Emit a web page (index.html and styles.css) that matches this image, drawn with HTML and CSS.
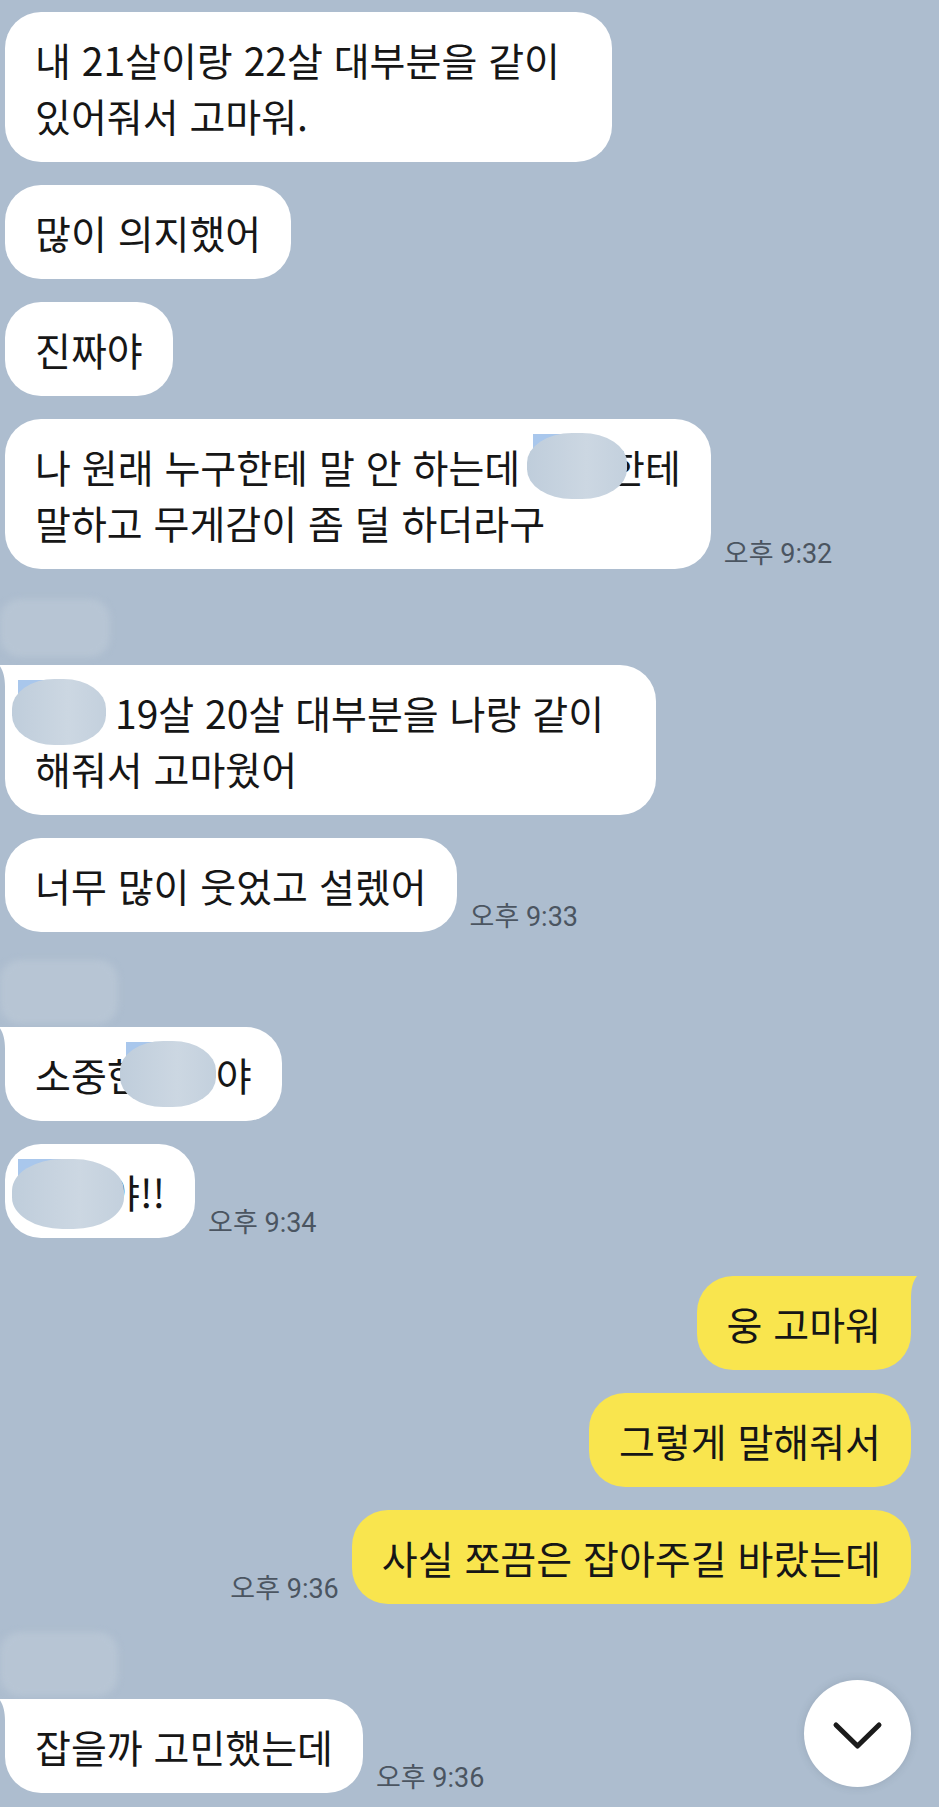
FILE: index.html
```html
<!DOCTYPE html>
<html lang="ko-KR">

<head>
  <meta charset="UTF-8">
  <meta name="viewport" content="width=device-width, initial-scale=1.0">
  <title>채팅</title>
  <link rel="stylesheet" href="styles.css">
</head>

<body>
  <main class="chat">
    <section class="group">
      <div class="row in">
        <p class="bubble multi">내 21살이랑 22살 대부분을 같이<br>있어줘서 고마워.</p>
      </div>
      <div class="row in">
        <p class="bubble">많이 의지했어</p>
      </div>
      <div class="row in">
        <p class="bubble">진짜야</p>
      </div>
      <div class="row in">
        <p class="bubble">나 원래 누구한테 말 안 하는데 <span class="blur b1"></span>한테<br>말하고 무게감이 좀 덜 하더라구</p>
        <span class="time">오후 9:32</span>
      </div>
    </section>

    <section class="group">
      <div class="sender"></div>
      <div class="row in">
        <p class="bubble tail multi"><span class="blur b2"></span>19살 20살 대부분을 나랑 같이<br>해줘서 고마웠어</p>
      </div>
      <div class="row in">
        <p class="bubble">너무 많이 웃었고 설렜어</p>
        <span class="time">오후 9:33</span>
      </div>
    </section>

    <section class="group">
      <div class="sender wide"></div>
      <div class="row in">
        <p class="bubble tail">소중한<span class="blur b3"></span>야</p>
      </div>
      <div class="row in">
        <p class="bubble"><span class="blur b4"></span>야!!</p>
        <span class="time">오후 9:34</span>
      </div>
    </section>

    <section class="group mine">
      <div class="row out">
        <p class="bubble tail">웅 고마워</p>
      </div>
      <div class="row out">
        <p class="bubble">그렇게 말해줘서</p>
      </div>
      <div class="row out">
        <span class="time">오후 9:36</span>
        <p class="bubble">사실 쪼끔은 잡아주길 바랐는데</p>
      </div>
    </section>

    <section class="group">
      <div class="sender wide"></div>
      <div class="row in">
        <p class="bubble tail">잡을까 고민했는데</p>
        <span class="time">오후 9:36</span>
      </div>
    </section>
  </main>

  <button type="button" class="scroll-down" aria-label="아래로">
    <svg viewBox="0 0 107 107" width="107" height="107">
      <polyline points="32,45 53.5,66 75,45" fill="none" stroke="#1b1b1b" stroke-width="5" stroke-linecap="round" stroke-linejoin="round" />
    </svg>
  </button>
</body>

</html>
```

FILE: styles.css
```css
* {
  box-sizing: border-box;
}

html,
body {
  margin: 0;
}

body {
  min-height: 1807px;
  background: #adbdcf;
  font-family: "Noto Sans CJK KR", "Noto Sans", sans-serif;
  color: #161616;
  overflow: hidden;
  position: relative;
}

.chat {
  display: flex;
  flex-direction: column;
  padding: 12px 28px 0 5px;
}

.group {
  display: flex;
  flex-direction: column;
  gap: 23px;
}

.group.mine {
  margin-top: 38px;
}

.sender {
  width: 110px;
  height: 58px;
  margin: 30px 0 -15px -5px;
  background: #b7c5d4;
  border-radius: 20px;
  filter: blur(3px);
}

.sender.wide {
  width: 118px;
  height: 64px;
  margin: 28px 0 -20px -5px;
}

.row {
  display: flex;
  align-items: flex-end;
  gap: 13px;
}

.row.out {
  justify-content: flex-end;
}

.bubble {
  position: relative;
  margin: 0;
  padding: 19px 30px;
  font-size: 39px;
  line-height: 56px;
  white-space: nowrap;
  background: #fff;
  border-radius: 36px;
}

.bubble.multi {
  padding-right: 52px;
}

.out .bubble {
  background: #f9e54e;
}

.in .bubble.tail {
  border-top-left-radius: 10px;
}

.out .bubble.tail {
  border-top-right-radius: 10px;
}

.bubble.tail::before {
  content: "";
  position: absolute;
  top: 0;
  width: 20px;
  height: 22px;
  background: inherit;
}

.in .bubble.tail::before {
  left: -6px;
  clip-path: path("M0 0 H20 V22 H6 C6 12 4 5 0 0 Z");
}

.out .bubble.tail::before {
  right: -6px;
  clip-path: path("M20 0 H0 V22 H14 C14 12 16 5 20 0 Z");
}

.time {
  font-family: Roboto, "Noto Sans CJK KR", sans-serif;
  font-size: 27px;
  line-height: 30px;
  color: #4b5561;
  white-space: nowrap;
  margin-bottom: 0;
}

/* 가려진 이름 */
.blur {
  position: relative;
  display: inline-block;
  vertical-align: top;
  height: 56px;
}

.blur::before,
.blur::after {
  content: "";
  position: absolute;
}

.blur::before {
  left: 6px;
  top: -4px;
  width: 40%;
  height: 70%;
  background: #a9c7ec;
}

.blur::after {
  inset: -5px 0;
  background: linear-gradient(90deg, #bfcddb, #ccd7e2 60%, #c3d0dd);
  border-radius: 45%;
  filter: blur(0.6px);
}

.b1 {
  width: 100px;
  margin: 0 -18px 0 -4px;
}

.b2 {
  width: 94px;
  margin: 0 9px 0 -23px;
}

.b3 {
  width: 96px;
  margin: 0 0 0 -23px;
}

.b4 {
  width: 112px;
  margin: 0 -20px 0 -23px;
}

.b4::after {
  inset: -4px 0 -10px;
}

.scroll-down {
  position: absolute;
  left: 804px;
  top: 1680px;
  width: 107px;
  height: 107px;
  padding: 0;
  border: none;
  border-radius: 50%;
  background: #fff;
  box-shadow: 0 0 8px rgba(60, 75, 95, 0.18);
}

.scroll-down svg {
  display: block;
}
```
